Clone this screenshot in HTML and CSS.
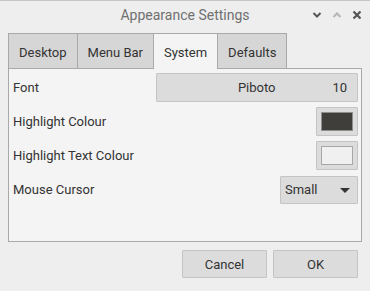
FILE: index.html
```html
<!DOCTYPE html>
<html lang="en">
<head>
    <meta charset="UTF-8">
    <title>Appearance Settings</title>
    <link rel="stylesheet" href="styles.css">
</head>
<body>
    <div class="titlebar">
        <span></span>
        <div class="title">Appearance Settings</div>
        <div class="controls">
            <svg class="ctl" width="10" height="10" viewBox="0 0 10 10"><path d="M1.5 3 L5 6.5 L8.5 3" fill="none" stroke="#555" stroke-width="2"/></svg>
            <svg class="ctl" width="10" height="10" viewBox="0 0 10 10"><path d="M1.5 7 L5 3.5 L8.5 7" fill="none" stroke="#b5b5b5" stroke-width="2"/></svg>
            <svg class="ctl" width="10" height="10" viewBox="0 0 10 10"><path d="M1.5 1.5 L8.5 8.5 M8.5 1.5 L1.5 8.5" fill="none" stroke="#555" stroke-width="2.2"/></svg>
        </div>
    </div>

    <div class="notebook">
        <div class="tabs">
            <div class="tab">Desktop</div>
            <div class="tab">Menu Bar</div>
            <div class="tab active">System</div>
            <div class="tab">Defaults</div>
        </div>
        <div class="panel">
            <div class="row">
                <span class="label">Font</span>
                <button class="button font-btn"><span class="font-name">Piboto</span><span class="font-size">10</span></button>
            </div>
            <div class="row">
                <span class="label">Highlight Colour</span>
                <button class="button colour-btn"><span class="swatch dark"></span></button>
            </div>
            <div class="row">
                <span class="label">Highlight Text Colour</span>
                <button class="button colour-btn"><span class="swatch light"></span></button>
            </div>
            <div class="row">
                <span class="label">Mouse Cursor</span>
                <button class="button combo"><span>Small</span><span class="arrow"></span></button>
            </div>
        </div>
    </div>

    <div class="actions">
        <button class="button action">Cancel</button>
        <button class="button action">OK</button>
    </div>
</body>
</html>
```

FILE: styles.css
```css
body {
    margin: 0;
    width: 370px;
    height: 291px;
    background: #eeeeee;
    font-family: Roboto, "Liberation Sans", sans-serif;
    font-size: 13px;
    color: #333333;
    overflow: hidden;
}

.titlebar {
    display: grid;
    grid-template-columns: 1fr auto 1fr;
    align-items: center;
    height: 29px;
    border-top: 1px solid #c6c6c6;
    box-sizing: border-box;
}

.title {
    color: #707070;
    font-size: 14px;
}

.controls {
    display: flex;
    justify-content: flex-end;
    gap: 10px;
    padding-right: 8px;
}

.ctl {
    display: block;
}

.notebook {
    margin: 4px 8px 0 8px;
}

.tabs {
    display: flex;
    height: 35px;
}

.tab {
    display: flex;
    align-items: center;
    padding: 3px 10px 0 10px;
    background: #d6d6d6;
    border: 1px solid #a9a9a9;
    border-bottom: none;
    margin-right: -1px;
    box-sizing: border-box;
}

.tab.active {
    background: #f4f4f4;
    position: relative;
    z-index: 1;
    height: 36px;
    padding-bottom: 1px;
}

.panel {
    display: flex;
    flex-direction: column;
    gap: 5px;
    height: 174px;
    box-sizing: border-box;
    padding: 4px 3px 4px 4px;
    background: #f4f4f4;
    border: 1px solid #a9a9a9;
}

.row {
    display: flex;
    align-items: center;
    justify-content: space-between;
    height: 29px;
}

.button {
    font-family: inherit;
    font-size: 13px;
    color: #333333;
    background: #dcdcdc;
    border: 1px solid #c4c4c4;
    border-radius: 1px;
    padding: 0;
    box-sizing: border-box;
}

.font-btn {
    display: flex;
    align-items: center;
    width: 202px;
    height: 29px;
    padding: 0 10px 0 0;
}

.font-name {
    flex: 1;
    text-align: center;
    padding-left: 24px;
}

.colour-btn {
    display: flex;
    align-items: center;
    justify-content: center;
    width: 42px;
    height: 29px;
}

.swatch {
    display: block;
    width: 32px;
    height: 19px;
    box-sizing: border-box;
    border: 1px solid #8e8e8e;
}

.swatch.dark {
    background: #3f3e3a;
}

.swatch.light {
    background: #f0f0f0;
    border-color: #a8a8a8;
}

.combo {
    display: flex;
    align-items: center;
    justify-content: space-between;
    width: 78px;
    height: 28px;
    padding: 0 7px 0 4px;
}

.arrow {
    width: 0;
    height: 0;
    border-left: 5px solid transparent;
    border-right: 5px solid transparent;
    border-top: 5px solid #333333;
    margin-top: 2px;
}

.actions {
    display: flex;
    justify-content: flex-end;
    gap: 6px;
    margin-top: 8px;
    padding-right: 12px;
}

.action {
    width: 85px;
    height: 28px;
}
```
